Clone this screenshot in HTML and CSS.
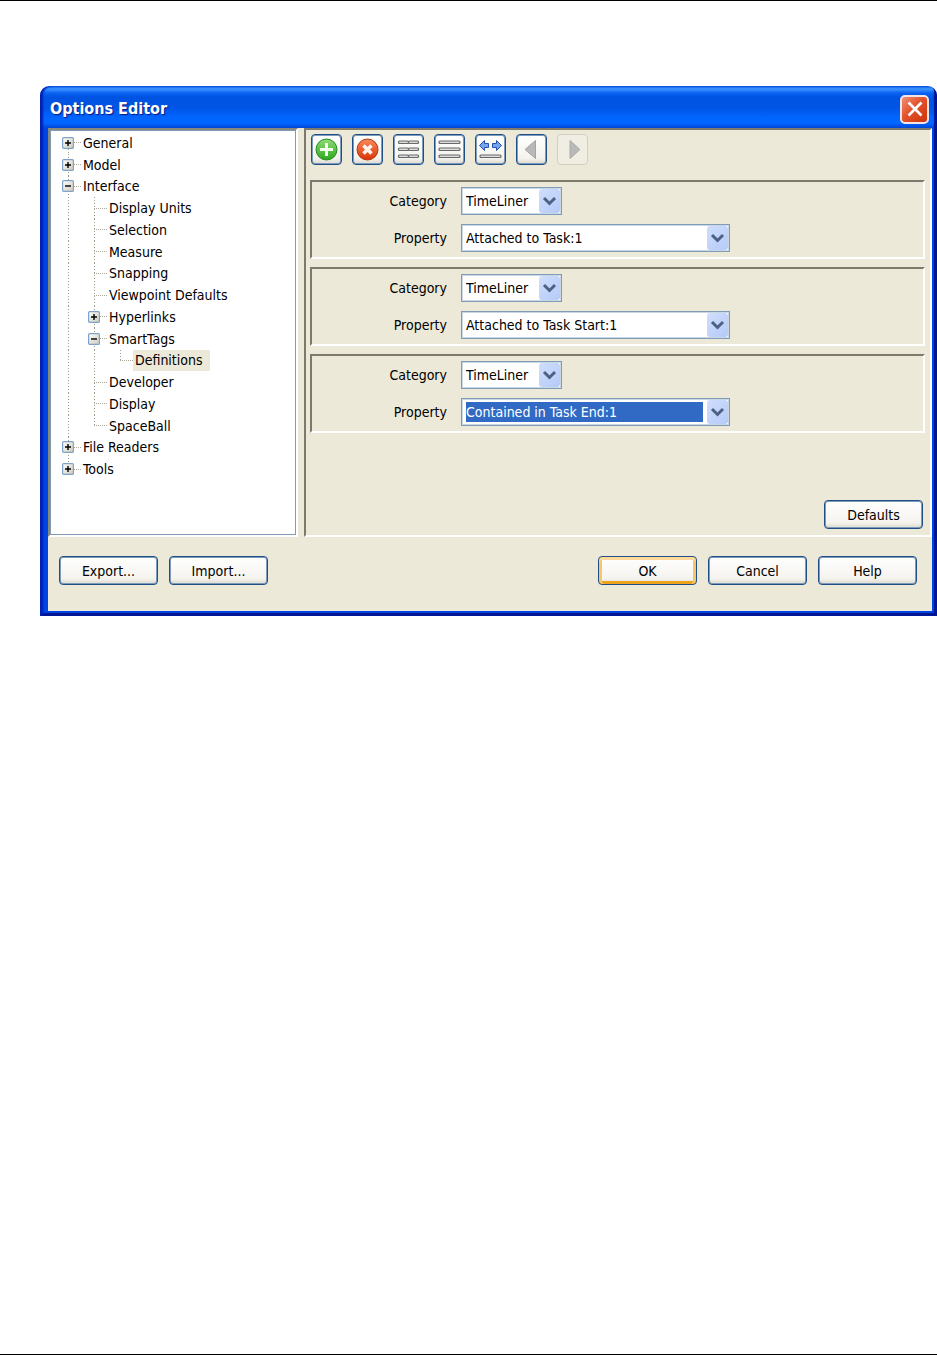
FILE: index.html
```html
<!DOCTYPE html>
<html lang="en">
<head>
<meta charset="utf-8">
<title>Options Editor</title>
<link rel="stylesheet" href="styles.css">
</head>
<body class="page">
<svg class="defs" width="0" height="0" aria-hidden="true">
  <defs>
    <linearGradient id="green" x1="0" y1="0" x2="0" y2="1"><stop offset="0" stop-color="#8fdc74"/><stop offset="1" stop-color="#2fa81c"/></linearGradient>
    <linearGradient id="red" x1="0" y1="0" x2="0" y2="1"><stop offset="0" stop-color="#f98a5c"/><stop offset="1" stop-color="#dd3305"/></linearGradient>
    <linearGradient id="box" x1="0" y1="0" x2="1" y2="1"><stop offset="0" stop-color="#fff"/><stop offset="1" stop-color="#cfc9ba"/></linearGradient>
    <g id="plus"><rect x=".6" y=".6" width="10.800" height="10.800" rx="1" fill="url(#box)" stroke="#7fa3c8" stroke-width="1.200"/><path d="M3 6h6M6 3v6" stroke="#000" fill="none" stroke-width="1.400"/></g>
    <g id="minus"><rect x=".6" y=".6" width="10.800" height="10.800" rx="1" fill="url(#box)" stroke="#7fa3c8" stroke-width="1.200"/><path d="M3 6h6" stroke="#000" fill="none" stroke-width="1.400"/></g>
    <path id="chevron" d="M5 9l5.500 5.500 5.500-5.500" fill="none" stroke="#4d6185" stroke-width="3"/>
  </defs>
</svg>
<main class="dialog">
  <header class="titlebar">
    <h1 class="title">Options Editor</h1>
    <button class="close" type="button" aria-label="Close"><svg width="18" height="18" viewBox="0 0 18 18"><path d="M2.500 2.500l13 13M15.500 2.500l-13 13" stroke="#fff" stroke-width="2.600" fill="none"/></svg></button>
  </header>
  <div class="client">
    <div class="panes">
      <nav class="tree-pane" aria-label="Options">
        <ul class="tree">
          <li class="row"><span class="cell first"><svg class="toggle"><use href="#plus"/></svg></span><span class="name">General</span></li>
          <li class="row"><span class="cell line"><svg class="toggle"><use href="#plus"/></svg></span><span class="name">Model</span></li>
          <li class="row"><span class="cell line"><svg class="toggle"><use href="#minus"/></svg></span><span class="name">Interface</span></li>
          <li class="row"><span class="cell line"></span><span class="cell line branch"></span><span class="name">Display Units</span></li>
          <li class="row"><span class="cell line"></span><span class="cell line branch"></span><span class="name">Selection</span></li>
          <li class="row"><span class="cell line"></span><span class="cell line branch"></span><span class="name">Measure</span></li>
          <li class="row"><span class="cell line"></span><span class="cell line branch"></span><span class="name">Snapping</span></li>
          <li class="row"><span class="cell line"></span><span class="cell line branch"></span><span class="name">Viewpoint Defaults</span></li>
          <li class="row"><span class="cell line"></span><span class="cell line"><svg class="toggle"><use href="#plus"/></svg></span><span class="name">Hyperlinks</span></li>
          <li class="row"><span class="cell line"></span><span class="cell line"><svg class="toggle"><use href="#minus"/></svg></span><span class="name">SmartTags</span></li>
          <li class="row"><span class="cell line"></span><span class="cell line"></span><span class="cell last branch"></span><span class="name selected">Definitions</span></li>
          <li class="row"><span class="cell line"></span><span class="cell line branch"></span><span class="name">Developer</span></li>
          <li class="row"><span class="cell line"></span><span class="cell line branch"></span><span class="name">Display</span></li>
          <li class="row"><span class="cell line"></span><span class="cell last branch"></span><span class="name">SpaceBall</span></li>
          <li class="row"><span class="cell line"><svg class="toggle"><use href="#plus"/></svg></span><span class="name">File Readers</span></li>
          <li class="row"><span class="cell last"><svg class="toggle"><use href="#plus"/></svg></span><span class="name">Tools</span></li>
        </ul>
      </nav>
      <section class="content">
        <div class="toolbar">
          <button class="tool" type="button" aria-label="Add"><svg width="25" height="25" viewBox="0 0 25 25"><circle cx="12.500" cy="12.500" r="10.500" fill="url(#green)" stroke="#238a20"/><path d="M12.500 6v13M6 12.500h13" stroke="#f3fff0" stroke-width="3"/></svg></button>
          <button class="tool" type="button" aria-label="Delete"><svg width="25" height="25" viewBox="0 0 25 25"><circle cx="12.500" cy="12.500" r="10.500" fill="url(#red)" stroke="#b83210"/><path d="M8.500 8.500l8 8M16.500 8.500l-8 8" stroke="#fff3ec" stroke-width="3.600"/></svg></button>
          <button class="tool" type="button" aria-label="Grid view"><svg width="25" height="25" viewBox="0 0 25 25" fill="#dcdcdc" stroke="#686868" stroke-width="1.200"><rect x="2.500" y="4" width="10" height="2.500" rx="1"/><rect x="12.500" y="4" width="10" height="2.500" rx="1"/><rect x="2.500" y="11" width="10" height="2.500" rx="1"/><rect x="12.500" y="11" width="10" height="2.500" rx="1"/><rect x="2.500" y="18" width="10" height="2.500" rx="1"/><rect x="12.500" y="18" width="10" height="2.500" rx="1"/></svg></button>
          <button class="tool" type="button" aria-label="List view"><svg width="25" height="25" viewBox="0 0 25 25" fill="#dcdcdc" stroke="#686868" stroke-width="1.200"><rect x="2" y="4" width="21" height="2.500" rx="1"/><rect x="2" y="11" width="21" height="2.500" rx="1"/><rect x="2" y="18" width="21" height="2.500" rx="1"/></svg></button>
          <button class="tool" type="button" aria-label="Records view"><svg width="25" height="25" viewBox="0 0 25 25"><path d="M1.500 8.500l5-5v3h4v4h-4v3z" fill="#78a4ee" stroke="#2450b0" stroke-linejoin="round"/><path d="M23.500 8.500l-5-5v3h-4v4h4v3z" fill="#78a4ee" stroke="#2450b0" stroke-linejoin="round"/><rect x="2" y="18" width="21" height="2.500" rx="1" fill="#dcdcdc" stroke="#686868" stroke-width="1.200"/></svg></button>
          <button class="tool" type="button" aria-label="Previous"><svg width="25" height="25" viewBox="0 0 25 25"><path d="M16.500 3.500v18l-10.500-9z" fill="#b9b9b9" stroke="#a3a3a3"/></svg></button>
          <button class="tool" type="button" aria-label="Next" disabled><svg width="25" height="25" viewBox="0 0 25 25"><path d="M10 3.500v18l10-9z" fill="#b9b9b9" stroke="#aaa"/></svg></button>
        </div>
        <div class="group">
          <label class="label" for="c1">Category</label>
          <div class="combo short"><select class="select" id="c1"><option>TimeLiner</option></select><svg class="arrow"><use href="#chevron"/></svg></div>
          <label class="label" for="p1">Property</label>
          <div class="combo"><select class="select" id="p1"><option>Attached to Task:1</option></select><svg class="arrow"><use href="#chevron"/></svg></div>
        </div>
        <div class="group">
          <label class="label" for="c2">Category</label>
          <div class="combo short"><select class="select" id="c2"><option>TimeLiner</option></select><svg class="arrow"><use href="#chevron"/></svg></div>
          <label class="label" for="p2">Property</label>
          <div class="combo"><select class="select" id="p2"><option>Attached to Task Start:1</option></select><svg class="arrow"><use href="#chevron"/></svg></div>
        </div>
        <div class="group">
          <label class="label" for="c3">Category</label>
          <div class="combo short"><select class="select" id="c3"><option>TimeLiner</option></select><svg class="arrow"><use href="#chevron"/></svg></div>
          <label class="label" for="p3">Property</label>
          <div class="combo"><select class="select active" id="p3"><option>Contained in Task End:1</option></select><svg class="arrow"><use href="#chevron"/></svg></div>
        </div>
        <button class="button defaults" type="button">Defaults</button>
      </section>
    </div>
    <footer class="footer">
      <button class="button" type="button">Export...</button>
      <button class="button" type="button">Import...</button>
      <button class="button primary" type="button">OK</button>
      <button class="button" type="button">Cancel</button>
      <button class="button" type="button">Help</button>
    </footer>
  </div>
</main>
</body>
</html>
```
FILE: styles.css
```css
* { box-sizing: border-box; }

.page {
  margin: 0;
  min-height: 100vh;
  padding: 85px 0 40px 40px;
  border-top: 1px solid #000;
  border-bottom: 1px solid #000;
  background: #fff;
  color: #000;
  font: 14px/20px "DejaVu Sans Condensed", "DejaVu Sans", sans-serif;
}
.defs { position: absolute; }

.dialog {
  padding: 0 5px 5px 8px;
  border-radius: 9px 9px 0 0;
  background: linear-gradient(#0a5ef0 0, #3d95ff 3px, #0a62f2 7px, #0053e1 11px, #0055e6 22px, #0066ff 32px, #0066ff 37px, #0046d8 42px, transparent 42px), #0046e4;
  box-shadow: inset 3px 0 2px #0020b8, inset -3px -3px 1px #001590;
}
.titlebar {
  display: flex;
  align-items: center;
  justify-content: space-between;
  height: 42px;
  padding: 4px 3px 0 2px;
}
.title {
  margin: 0;
  color: #fff;
  font-size: 16px;
  line-height: 20px;
  text-shadow: 1px 1px 1px #0a1883;
}
.close {
  display: grid;
  place-items: center;
  width: 29px;
  height: 29px;
  padding: 0;
  border: 2px solid #f4e4e4;
  border-radius: 5px;
  background: linear-gradient(135deg, #ee9078, #e2522c 45%, #cf3408);
}
.client { background: #ece9d8; }

.panes {
  display: grid;
  grid-template-columns: 250px 1fr;
  gap: 6px;
  min-height: 409px;
}
.tree-pane {
  padding: 2px 0 0 3px;
  border: 2px solid #fff;
  border-top-color: #8a887b;
  border-left-color: #8a887b;
  background: #fff;
  box-shadow: inset 0 0 0 1px #7f9db9;
}
.tree {
  display: grid;
  grid-auto-rows: 1fr;
  height: 348px;
  margin: 0;
  padding: 0 0 0 2px;
  list-style: none;
}
.row { display: flex; align-items: stretch; }
.cell {
  display: flex;
  align-items: center;
  width: 26px;
  padding-left: 7px;
  --v: repeating-linear-gradient(#a09d8c 0 1px, transparent 1px 3px);
  --h: repeating-linear-gradient(90deg, #aaa798 0 1px, transparent 1px 2px);
}
.line { background: var(--v) 13px 0 / 1px 100% no-repeat; }
.first { background: var(--v) 13px 100% / 1px 50% no-repeat, var(--h) 100% 50% / 7px 1px no-repeat; }
.last { background: var(--v) 13px 0 / 1px 50% no-repeat, var(--h) 100% 50% / 7px 1px no-repeat; }
.line:has(.toggle) { background: var(--v) 13px 0 / 1px 100% no-repeat, var(--h) 100% 50% / 7px 1px no-repeat; }
.line.branch { background: var(--v) 13px 0 / 1px 100% no-repeat, var(--h) 100% 50% / 13px 1px no-repeat; }
.last.branch { background: var(--v) 13px 0 / 1px 50% no-repeat, var(--h) 100% 50% / 13px 1px no-repeat; }
.toggle { width: 12px; height: 12px; }
.name { display: flex; align-items: center; padding: 0 7px 0 2px; }
.selected { background: #ece9d8; }

.content {
  display: flex;
  flex-direction: column;
  gap: 8px;
  padding: 4px 5px 6px 4px;
  border: 2px solid #fff;
  border-top-color: #7d7a6d;
  border-left-color: #7d7a6d;
}
.toolbar { display: flex; gap: 10px; margin: 0 1px 7px; }
.tool, .button {
  padding: 0;
  border: 1px solid #1f4f85;
  border-radius: 4px;
  background: linear-gradient(#fff, #f4f3ee 80%, #dcd8cc);
  box-shadow: inset 0 0 0 1px #7d9cbd;
}
.tool {
  display: grid;
  place-items: center;
  width: 31px;
  height: 31px;
}
.tool:disabled { border-color: #d2cfbf; background: #f0eee2; box-shadow: none; }

.group {
  display: grid;
  grid-template-columns: 135px 1fr;
  align-items: center;
  gap: 9px 14px;
  padding: 5px 0;
  border: 2px solid #fff;
  border-top-color: #7d7a6d;
  border-left-color: #7d7a6d;
}
.label { text-align: right; }
.combo { display: grid; max-width: 269px; }
.short { max-width: 101px; }
.select {
  grid-area: 1 / 1;
  appearance: none;
  width: 100%;
  height: 28px;
  padding: 3px 26px 3px 4px;
  border: 1px solid #7f9db9;
  border-radius: 0;
  background: #fff;
  box-shadow: inset 0 0 0 1px #c9d7e5;
  color: #000;
  font: inherit;
}
.active { background: linear-gradient(#316ac5, #316ac5) content-box, #fff; color: #fff; }
.arrow {
  grid-area: 1 / 1;
  place-self: center end;
  width: 21px;
  height: 24px;
  margin-right: 2px;
  border-radius: 3px;
  background: linear-gradient(135deg, #d0defc, #b4caf8);
  pointer-events: none;
}

.button {
  width: 99px;
  height: 29px;
  color: #000;
  font: inherit;
}
.defaults { align-self: flex-end; margin-top: auto; margin-right: 2px; }
.primary { margin-left: auto; box-shadow: inset 0 3px #fdd99a, inset 3px 0 #f9c56a, inset -3px 0 #f9c56a, inset 0 -3px #eea31c; }
.footer { display: flex; gap: 11px; padding: 19px 15px 26px 11px; }
```
